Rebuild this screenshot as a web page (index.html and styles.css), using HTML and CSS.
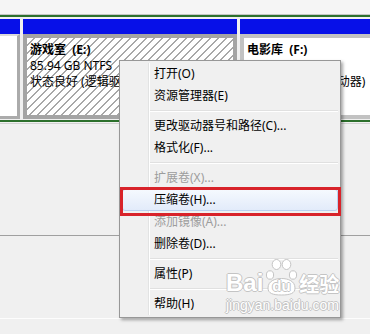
FILE: index.html
```html
<!DOCTYPE html>
<html lang="zh-CN">
<head>
<meta charset="utf-8">
<title>磁盘管理 - 压缩卷</title>
<link rel="stylesheet" href="styles.css">
</head>
<body>
<div class="screen">
  <div class="top-strip"></div>
  <div class="ext">
    <div class="vols">
      <div class="vol vol-a">
        <div class="vol-head"></div>
        <div class="vol-body"></div>
      </div>
      <div class="vol vol-b">
        <div class="vol-head"></div>
        <div class="vol-body">
          <div class="vol-title">游戏室&nbsp; (E:)</div>
          <div class="vol-line">85.94 GB NTFS</div>
          <div class="vol-line">状态良好 (逻辑驱动器)</div>
        </div>
      </div>
      <div class="vol vol-c">
        <div class="vol-head"></div>
        <div class="vol-body">
          <div class="vol-title">电影库&nbsp; (F:)</div>
          <div class="vol-line">97.66 GB NTFS</div>
          <div class="vol-line">状态良好 (逻辑驱动器)</div>
        </div>
      </div>
    </div>
  </div>
  <div class="strip strip-1"></div>
  <div class="strip strip-2"></div>
  <div class="strip strip-3"></div>

  <div class="menu">
    <div class="item">打开(O)</div>
    <div class="item">资源管理器(E)</div>
    <div class="sep"></div>
    <div class="item">更改驱动器号和路径(C)...</div>
    <div class="item">格式化(F)...</div>
    <div class="sep"></div>
    <div class="item disabled">扩展卷(X)...</div>
    <div class="item hot">压缩卷(H)...</div>
    <div class="item disabled">添加镜像(A)...</div>
    <div class="item">删除卷(D)...</div>
    <div class="sep"></div>
    <div class="item">属性(P)</div>
    <div class="sep"></div>
    <div class="item">帮助(H)</div>
  </div>

  <div class="callout"></div>

  <div class="wm">
    <div class="wm-row">
      <span class="wm-bai">Bai</span>
      <span class="wm-paw">
        <svg width="34" height="38" viewBox="0 0 34 38">
          <g fill="#fff" stroke="#c4c4c4" stroke-width="1">
            <ellipse cx="6" cy="17" rx="3.6" ry="4.2"/>
            <ellipse cx="12.5" cy="6.5" rx="4.3" ry="5"/>
            <ellipse cx="22.5" cy="6.5" rx="4.3" ry="5"/>
            <ellipse cx="29" cy="17" rx="3.6" ry="4.2"/>
            <path d="M4 30 C4 23 11 20.5 17.5 20.5 C24 20.5 31 23 31 30 C31 35.5 26 37 17.5 37 C9 37 4 35.5 4 30 Z"/>
          </g>
        </svg>
        <span class="wm-du">du</span>
      </span>
      <span class="wm-jy">经验</span>
    </div>
    <div class="wm-url">jingyan.baidu.com</div>
  </div>
</div>
</body>
</html>
```
FILE: styles.css
```css
html, body {
  margin: 0;
  padding: 0;
}

body {
  width: 370px;
  height: 334px;
  overflow: hidden;
  background: #f0f0f0;
  font-family: "Noto Sans", "Noto Sans CJK SC", sans-serif;
  font-size: 12px;
  color: #000;
}

.screen {
  position: relative;
  width: 370px;
  height: 334px;
}

.top-strip {
  height: 14px;
  background: #f5f5f5;
  border-bottom: 1px solid #c6c6c6;
}

.ext {
  border-top: 2px solid #2c702c;
  border-bottom: 2px solid #2c702c;
  padding: 2px 0 1px;
}

.vols {
  display: flex;
  gap: 3px;
  height: 100px;
}

.vol {
  display: flex;
  flex-direction: column;
}

.vol-head {
  height: 15px;
  background: #0710e8;
  flex: none;
}

.vol-body {
  flex: 1;
  min-height: 0;
  overflow: hidden;
  white-space: nowrap;
  box-sizing: border-box;
}

.vol-a {
  width: 20px;
  flex: none;
}

.vol-a .vol-body {
  background: #fff;
  border-top: 2px solid #dadada;
  border-right: 3px solid #ababab;
  border-bottom: 3px solid #ababab;
}

.vol-b {
  width: 214px;
  flex: none;
}

.vol-b .vol-body {
  border: 4px solid #a4a4a4;
  padding: 4px 3px;
  background-color: #fff;
  background-image: repeating-linear-gradient(135deg, transparent 0, transparent 4.6px, #a8a8a8 4.6px, #a8a8a8 5.66px);
}

.vol-c {
  flex: 1;
}

.vol-c .vol-body {
  border: 4px solid #c2c2c2;
  border-right: none;
  padding: 4px 3px;
  background: #fff;
}

.vol-title {
  font-weight: bold;
  line-height: 16px;
}

.vol-line {
  line-height: 16px;
}

.strip-1 {
  margin-top: 1px;
  height: 111px;
  border-top: 1px solid #d2d2d2;
}

.strip-2 {
  height: 82px;
  border-top: 1px solid #a0a0a0;
}

.strip-3 {
  height: 15px;
  border-top: 1px solid #fdfdfd;
}

/* context menu */
.menu {
  position: absolute;
  left: 119px;
  top: 60px;
  width: 222px;
  box-sizing: border-box;
  border: 1px solid #979797;
  background: #f0f0f0;
  padding: 2px;
  box-shadow: 2px 2px 3px rgba(0, 0, 0, 0.35);
}

.menu::before {
  content: "";
  position: absolute;
  left: 28px;
  top: 2px;
  bottom: 2px;
  width: 1px;
  background: #e2e3e3;
  border-right: 1px solid #ffffff;
}

.item {
  position: relative;
  z-index: 1;
  height: 22px;
  line-height: 22px;
  padding-left: 32px;
  white-space: nowrap;
}

.item.disabled {
  color: #9d9d9d;
}

.item.hot {
  box-sizing: border-box;
  border: 1px solid #b8d0f0;
  border-radius: 3px;
  background: linear-gradient(#f5f9fe, #e2ebfa);
  line-height: 20px;
  padding-left: 31px;
}

.sep {
  position: relative;
  height: 8px;
  margin-left: 28px;
}

.sep::after {
  content: "";
  position: absolute;
  left: 0;
  right: 0;
  top: 3px;
  height: 1px;
  background: #e0e0e0;
  border-bottom: 1px solid #ffffff;
}

/* red annotation box */
.callout {
  position: absolute;
  left: 120px;
  top: 187px;
  width: 221px;
  height: 29px;
  box-sizing: border-box;
  border: 3px solid #d8232a;
  z-index: 2;
}

/* watermark */
.wm {
  position: absolute;
  left: 226px;
  top: 256px;
  z-index: 3;
  color: #ffffff;
  font-family: "Liberation Sans", "Noto Sans CJK SC", sans-serif;
  text-shadow: 1px 0 0 #c4c4c4, -1px 0 0 #c4c4c4, 0 1px 0 #c4c4c4, 0 -1px 0 #c4c4c4;
}

.wm-row {
  display: flex;
  align-items: flex-end;
  height: 40px;
}

.wm-bai {
  font-size: 24px;
  font-weight: bold;
  line-height: 24px;
  padding-bottom: 1px;
}

.wm-paw {
  position: relative;
  width: 34px;
  height: 38px;
  margin-left: 1px;
}

.wm-paw svg {
  display: block;
}

.wm-du {
  position: absolute;
  left: 8px;
  top: 20px;
  font-size: 15px;
  font-weight: bold;
  line-height: 16px;
}

.wm-jy {
  font-family: "Noto Sans CJK SC", sans-serif;
  font-size: 20px;
  font-weight: bold;
  line-height: 20px;
  height: 20px;
  margin-left: 1px;
  margin-bottom: 2px;
}

.wm-url {
  font-size: 14px;
  line-height: 14px;
  margin-top: 2px;
}
```
